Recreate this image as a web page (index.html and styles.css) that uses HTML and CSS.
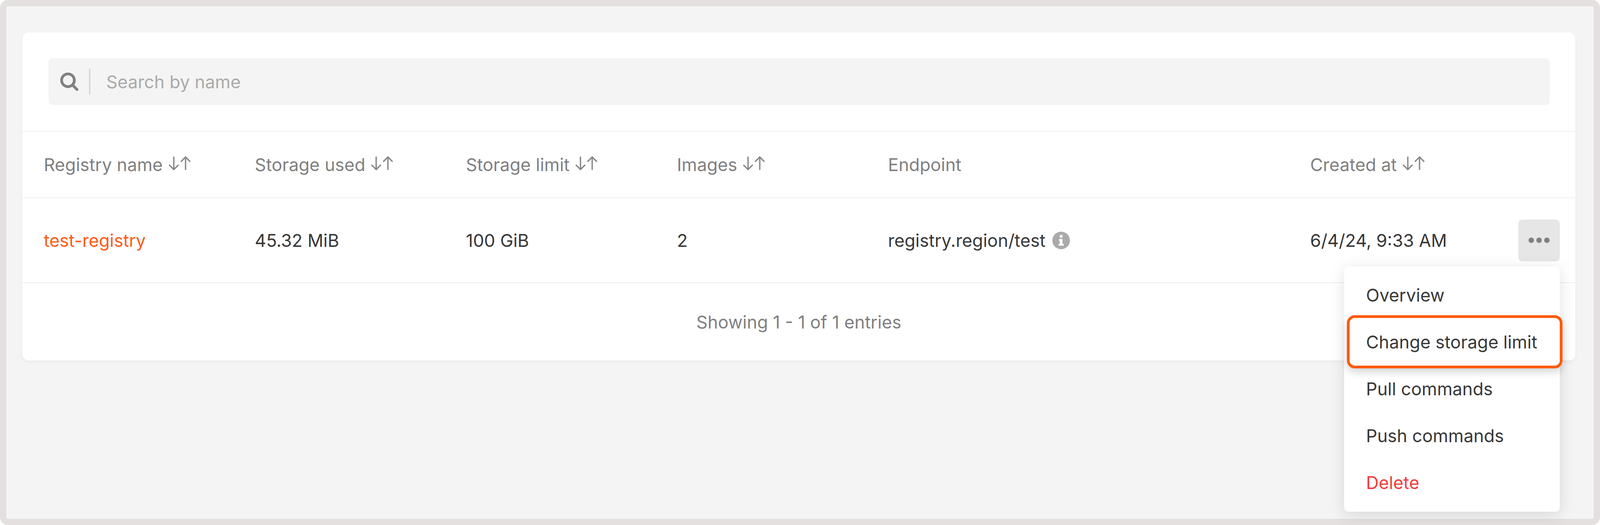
FILE: index.html
```html
<!DOCTYPE html>
<html lang="en">
<head>
<meta charset="utf-8">
<title>Registries</title>
<link rel="stylesheet" href="styles.css">
</head>
<body>
<div class="frame">
  <main class="card">
    <div class="search-area">
      <div class="search">
        <svg class="search-icon" viewBox="0 0 47 47" aria-hidden="true"><circle cx="20" cy="19.5" r="16.3"/><line x1="33" y1="33" x2="43" y2="43"/></svg>
        <span class="search-divider"></span>
        <span class="search-placeholder">Search by name</span>
      </div>
    </div>
    <div class="row head">
      <div class="cell">Registry name<svg class="sort" viewBox="0 0 56 36"><path d="M13 1V34M1 22L13 34L25 22M43 35V2M31 14L43 2L55 14"/></svg></div>
      <div class="cell">Storage used<svg class="sort" viewBox="0 0 56 36"><path d="M13 1V34M1 22L13 34L25 22M43 35V2M31 14L43 2L55 14"/></svg></div>
      <div class="cell">Storage limit<svg class="sort" viewBox="0 0 56 36"><path d="M13 1V34M1 22L13 34L25 22M43 35V2M31 14L43 2L55 14"/></svg></div>
      <div class="cell">Images<svg class="sort" viewBox="0 0 56 36"><path d="M13 1V34M1 22L13 34L25 22M43 35V2M31 14L43 2L55 14"/></svg></div>
      <div class="cell">Endpoint</div>
      <div class="cell">Created at<svg class="sort" viewBox="0 0 56 36"><path d="M13 1V34M1 22L13 34L25 22M43 35V2M31 14L43 2L55 14"/></svg></div>
    </div>
    <div class="row body-row">
      <div class="cell"><a class="link">test-registry</a></div>
      <div class="cell">45.32 MiB</div>
      <div class="cell">100 GiB</div>
      <div class="cell">2</div>
      <div class="cell">registry.region/test<svg class="info" viewBox="0 0 45 45" aria-hidden="true"><circle cx="22.5" cy="22.5" r="22.5"/><circle class="info-mark" cx="22.5" cy="12" r="4"/><path class="info-mark" d="M17 19H26V31H29V36H16V31H19V24H17Z"/></svg></div>
      <div class="cell last">
        <span class="date">6/4/24, 9:33 AM</span>
        <div class="actions">
          <button class="more" aria-label="More"><i></i><i></i><i></i></button>
          <ul class="menu">
            <li>Overview</li>
            <li class="highlight">Change storage limit</li>
            <li>Pull commands</li>
            <li>Push commands</li>
            <li class="danger">Delete</li>
          </ul>
        </div>
      </div>
    </div>
    <div class="footer">Showing 1 - 1 of 1 entries</div>
  </main>
</div>
</body>
</html>
```
FILE: styles.css
```css
* { box-sizing: border-box; }
html, body { margin: 0; padding: 0; background: #fff; }
body { font-family: Inter, "Liberation Sans", sans-serif; font-size: 45px; color: #383838; }

.frame {
  width: 100%;
  height: 100vh;
  border: 16px solid #e3e0df;
  border-radius: 20px;
  background: #f4f4f4;
  padding: 67px 47px 0 41px;
}

.card {
  background: #fff;
  border-radius: 16px;
  box-shadow: 0 3px 10px rgba(0, 0, 0, 0.05);
}

.search-area { padding: 66px 66px 66px 67px; border-bottom: 3px solid #f4f4f4; }
.search {
  display: flex;
  align-items: center;
  height: 120px;
  padding-left: 30px;
  background: #f4f4f4;
  border-radius: 10px;
}
.search-icon { width: 47px; height: 47px; fill: none; stroke: #808080; stroke-width: 7; stroke-linecap: round; }
.search-divider { width: 3px; height: 66px; background: #d2d2d2; margin: 0 41px 0 27px; }
.search-placeholder { color: #aaa; }

.row {
  display: grid;
  grid-template-columns: 586fr 586fr 586fr 586fr 1172fr 693fr;
  padding: 0 40px 0 55px;
  align-items: center;
  border-bottom: 3px solid #f4f4f4;
}
.head { height: 170px; color: #808080; }
.body-row { height: 217px; }
.cell { display: flex; align-items: center; white-space: nowrap; }
.last { justify-content: space-between; }

.sort { width: 56px; height: 36px; margin: -8px 0 0 15px; fill: none; stroke: #888; stroke-width: 3.5; }
.link { color: #ff5a14; }

.info { width: 45px; height: 45px; margin-left: 18px; fill: #aaa; }
.info .info-mark { fill: #fff; }

.actions { position: relative; }
.more {
  display: flex;
  align-items: center;
  justify-content: center;
  gap: 6px;
  width: 106px;
  height: 107px;
  padding: 0;
  border: 0;
  border-radius: 10px;
  background: #e6e6e6;
}
.more i { width: 14px; height: 14px; border-radius: 50%; background: #808080; }

.menu {
  position: absolute;
  top: 120px;
  right: 0;
  width: 552px;
  margin: 0;
  padding: 14px 0;
  list-style: none;
  background: #fff;
  border-radius: 12px;
  box-shadow: 0 8px 40px rgba(0, 0, 0, 0.12);
}
.menu li {
  position: relative;
  display: flex;
  align-items: center;
  height: 120px;
  padding-left: 56px;
  white-space: nowrap;
}
.menu .danger { color: #f23c3c; }
.highlight::after {
  content: "";
  position: absolute;
  top: -9px;
  bottom: -7px;
  left: 7px;
  right: -7px;
  border: 7px solid #ff5a0a;
  border-radius: 20px;
  box-shadow: 0 10px 20px rgba(0, 0, 0, 0.16);
}

.footer {
  display: flex;
  align-items: center;
  justify-content: center;
  height: 198px;
  color: #808080;
}
```
